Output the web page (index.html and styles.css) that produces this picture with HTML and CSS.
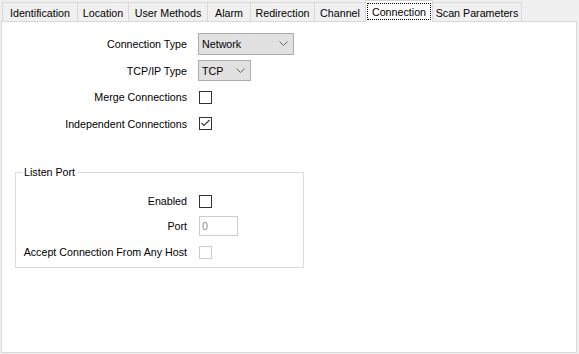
FILE: index.html
```html
<!DOCTYPE html>
<html>
<head>
<meta charset="utf-8">
<link rel="stylesheet" href="styles.css">
</head>
<body>
<div class="tabs">
  <div class="tab t-ident">Identification</div>
  <div class="tab t-loc">Location</div>
  <div class="tab t-user">User Methods</div>
  <div class="tab t-alarm">Alarm</div>
  <div class="tab t-redir">Redirection</div>
  <div class="tab t-chan">Channel</div>
  <div class="tab t-conn active"><span class="focus">Connection</span></div>
  <div class="tab t-scan">Scan Parameters</div>
</div>
<div class="panel">
  <div class="form">
    <div class="row">
      <span class="lbl">Connection Type</span>
      <div class="select sel-wide"><span>Network</span><svg class="chev" width="9" height="5" viewBox="0 0 9 5"><polyline points="0.5,0.5 4.5,4.5 8.5,0.5" fill="none" stroke="#666" stroke-width="1"/></svg></div>
    </div>
    <div class="row">
      <span class="lbl">TCP/IP Type</span>
      <div class="select sel-narrow"><span>TCP</span><svg class="chev" width="9" height="5" viewBox="0 0 9 5"><polyline points="0.5,0.5 4.5,4.5 8.5,0.5" fill="none" stroke="#666" stroke-width="1"/></svg></div>
    </div>
    <div class="row row-short">
      <span class="lbl">Merge Connections</span>
      <span class="cb"></span>
    </div>
    <div class="row">
      <span class="lbl">Independent Connections</span>
      <span class="cb"><svg width="11" height="11" viewBox="0 0 11 11"><polyline points="1.5,5 4,7.5 9.5,2" fill="none" stroke="#333" stroke-width="1.1"/></svg></span>
    </div>
  </div>
  <fieldset class="group">
    <legend>Listen Port</legend>
    <div class="grow grow-1">
      <span class="glbl">Enabled</span>
      <span class="cb"></span>
    </div>
    <div class="grow grow-2">
      <span class="glbl">Port</span>
      <div class="port">0</div>
    </div>
    <div class="grow grow-3">
      <span class="glbl">Accept Connection From Any Host</span>
      <span class="cb cb-disabled"></span>
    </div>
  </fieldset>
</div>
</body>
</html>
```
FILE: styles.css
```css
html, body {
  margin: 0;
  padding: 0;
}
body {
  background: #f0f0f0;
  font-family: "Liberation Sans", Arial, sans-serif;
  font-size: 10.7px;
  color: #000;
  width: 579px;
  height: 354px;
  overflow: hidden;
}
.tabs {
  display: flex;
  align-items: flex-end;
  height: 21px;
  padding-left: 2px;
  position: relative;
  z-index: 1;
}
.tab {
  box-sizing: border-box;
  height: 19px;
  border: 1px solid #d9d9d9;
  border-bottom: 0;
  background: #f0f0f0;
  display: flex;
  align-items: center;
  justify-content: center;
  margin-right: -1px;
  padding-top: 1px;
  white-space: nowrap;
}
.t-ident { width: 76px; }
.t-loc { width: 52px; }
.t-user { width: 80px; }
.t-alarm { width: 44px; }
.t-redir { width: 65px; }
.t-chan { width: 52px; }
.t-conn { width: 68px; }
.t-scan { width: 90px; }
.tab.active {
  height: 22px;
  margin-bottom: -1px;
  background: #fff;
  position: relative;
  z-index: 2;
  padding: 2px 1px 2px 1px;
  align-items: stretch;
}
.focus {
  flex: 1;
  display: flex;
  align-items: center;
  justify-content: center;
  border: 1px dotted #000;
}
.panel {
  margin-left: 1px;
  width: 576px;
  height: 332px;
  box-sizing: border-box;
  border: 1px solid #d9d9d9;
  background: #fff;
}
.form {
  display: flex;
  flex-direction: column;
  gap: 4px;
  padding-top: 10px;
}
.row {
  display: flex;
  align-items: center;
  height: 23px;
}
.row-short {
  height: 22px;
}
.lbl {
  width: 185px;
  margin-right: 11px;
  text-align: right;
  white-space: nowrap;
}
.select {
  box-sizing: border-box;
  height: 22px;
  border: 1px solid #adadad;
  background: #e1e1e1;
  display: flex;
  align-items: center;
  justify-content: space-between;
  padding: 0 5px 0 3px;
}
.sel-wide { width: 96px; }
.sel-narrow { width: 53px; height: 21px; }
.chev { display: block; }
.cb {
  box-sizing: border-box;
  width: 13px;
  height: 13px;
  border: 1px solid #333;
  background: #fff;
  margin-left: 1px;
  display: flex;
  align-items: center;
  justify-content: center;
}
.cb svg { display: block; }
.cb-disabled {
  border-color: #cccccc;
}
.group {
  box-sizing: border-box;
  width: 289px;
  margin: 31px 0 0 13px;
  padding: 13px 0 5px 0;
  border: 1px solid #dcdcdc;
  min-inline-size: 0;
}
.group legend {
  padding: 0 2px;
  margin-left: 6px;
  line-height: 12px;
}
.grow {
  display: flex;
  align-items: center;
  height: 20px;
}
.grow-2 { margin-top: 5px; }
.grow-3 { margin-top: 6px; }
.glbl {
  width: 171px;
  margin-right: 11px;
  text-align: right;
  white-space: nowrap;
}
.port {
  box-sizing: border-box;
  width: 39px;
  height: 20px;
  margin-left: 1px;
  border: 1px solid #cccccc;
  background: #fff;
  color: #8a8a8a;
  padding-left: 2px;
  line-height: 18px;
}
```
